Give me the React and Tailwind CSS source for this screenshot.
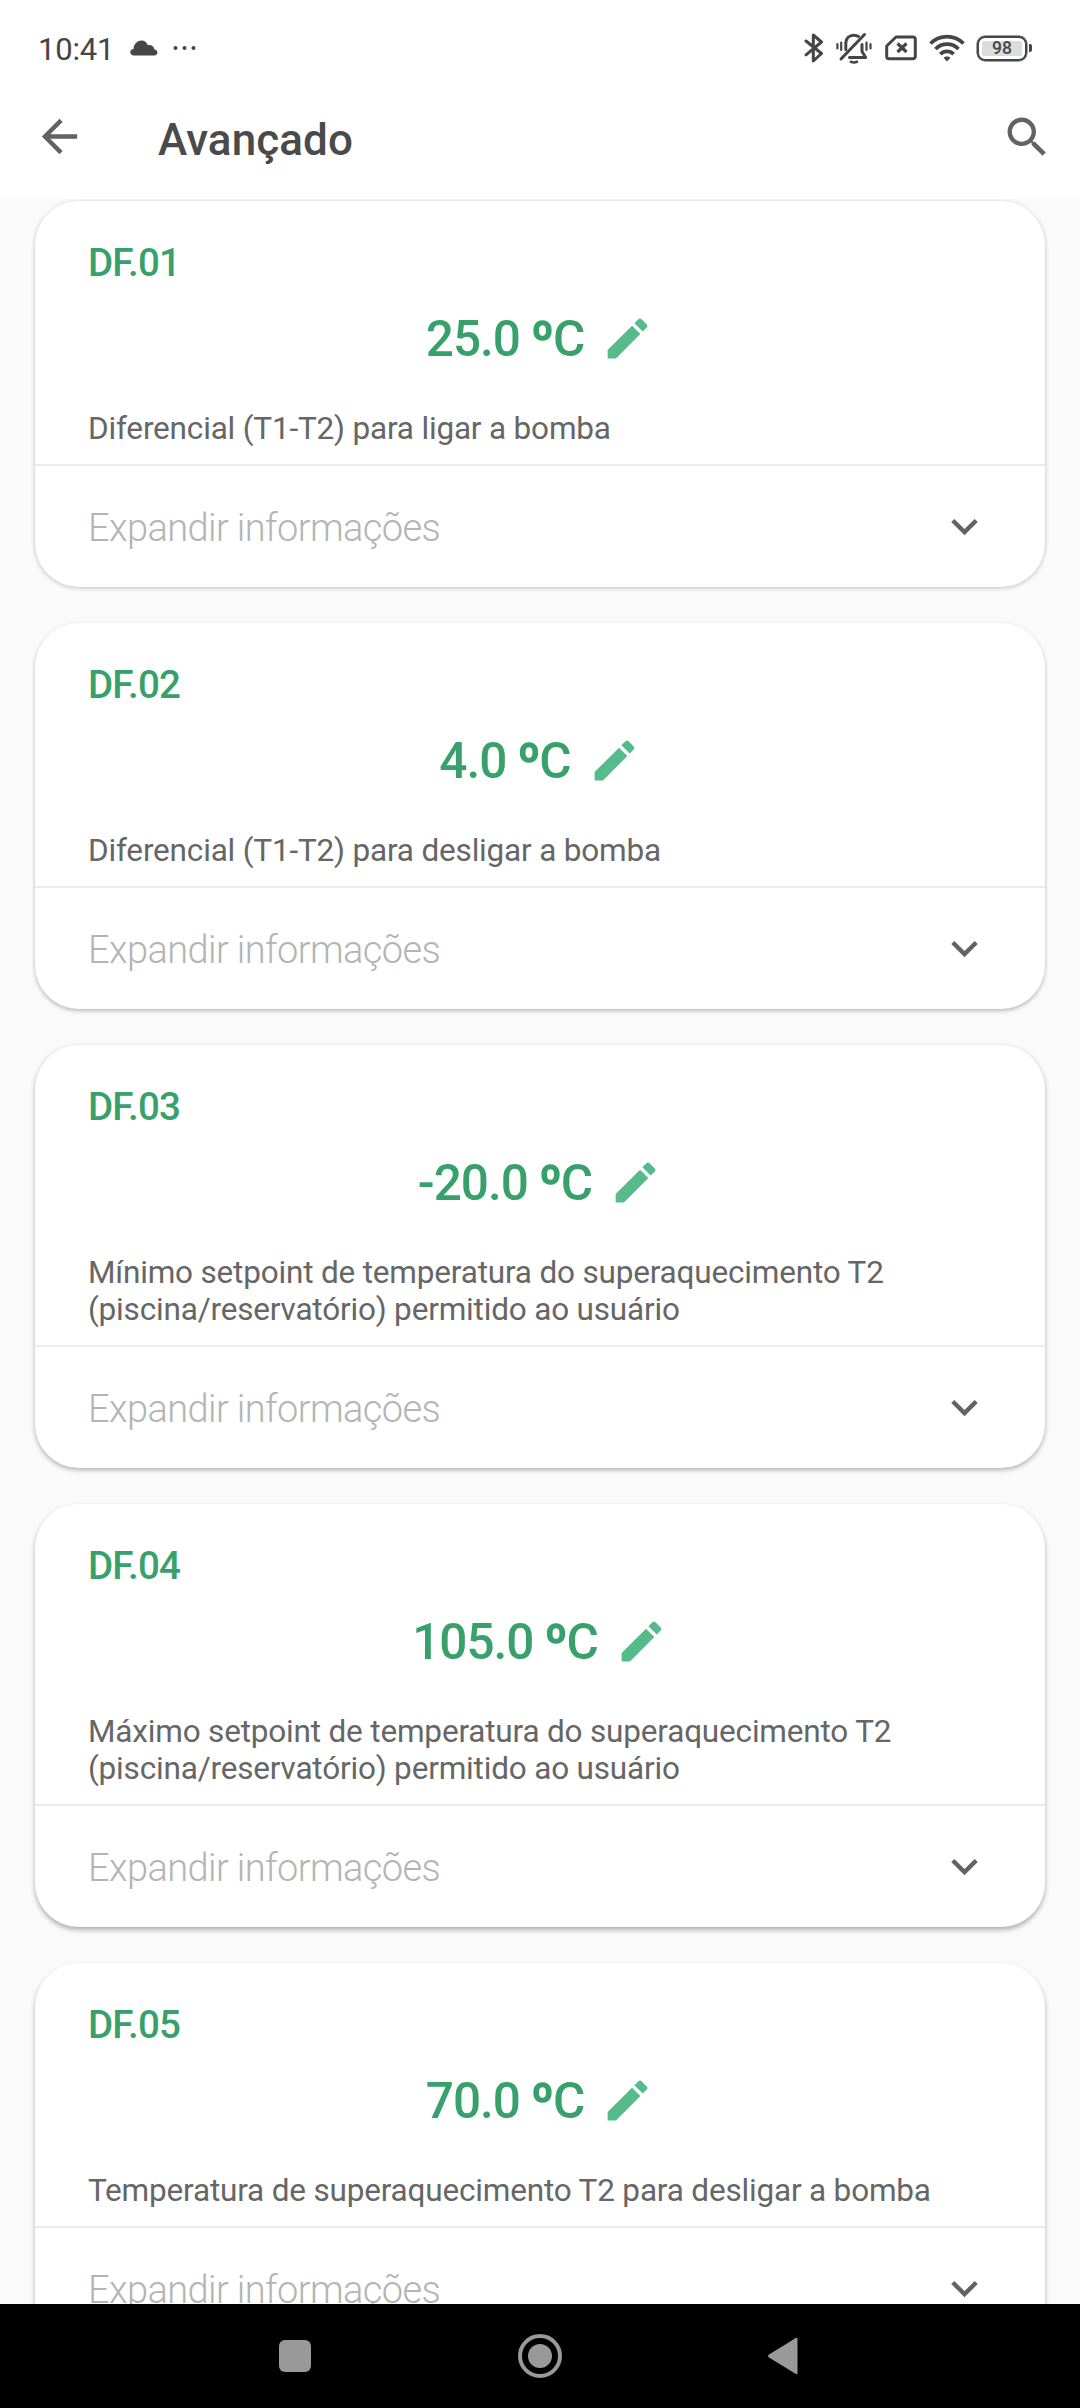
import React from "react";

const ITEMS = [
  { code: "DF.01", value: "25.0", lines: ["Diferencial (T1-T2) para ligar a bomba"], shadow: "shadow-[0_1px_4px_rgba(0,0,0,0.24)]" },
  { code: "DF.02", value: "4.0", lines: ["Diferencial (T1-T2) para desligar a bomba"], shadow: "shadow-[0_2px_4px_rgba(0,0,0,0.26)]" },
  { code: "DF.03", value: "-20.0", lines: ["Mínimo setpoint de temperatura do superaquecimento T2", "(piscina/reservatório) permitido ao usuário"], shadow: "shadow-[0_2px_5px_rgba(0,0,0,0.30)]" },
  { code: "DF.04", value: "105.0", lines: ["Máximo setpoint de temperatura do superaquecimento T2", "(piscina/reservatório) permitido ao usuário"], shadow: "shadow-[0_3px_5px_rgba(0,0,0,0.30)]" },
  { code: "DF.05", value: "70.0", lines: ["Temperatura de superaquecimento T2 para desligar a bomba"], shadow: "shadow-[0_3px_5px_rgba(0,0,0,0.30)]" },
];

function MaterialIcon({ d, className }) {
  return (
    <svg viewBox="0 0 24 24" fill="currentColor" className={className}>
      <path d={d} />
    </svg>
  );
}

const BACK = "M20 11H7.83l5.59-5.59L12 4l-8 8 8 8 1.41-1.41L7.83 13H20v-2z";
const SEARCH = "M15.5 14h-.79l-.28-.27C15.41 12.59 16 11.11 16 9.5 16 5.91 13.09 3 9.5 3S3 5.91 3 9.5 5.91 16 9.5 16c1.61 0 3.09-.59 4.23-1.57l.27.28v.79l5 4.99L20.49 19l-4.99-5zm-6 0C7.01 14 5 11.99 5 9.5S7.01 5 9.5 5 14 7.01 14 9.5 11.99 14 9.5 14z";
const EDIT = "M3 17.25V21h3.75L17.81 9.94l-3.75-3.75L3 17.25zM20.71 7.04c.39-.39.39-1.02 0-1.41l-2.34-2.34c-.39-.39-1.02-.39-1.41 0l-1.83 1.83 3.75 3.75 1.83-1.83z";
const EXPAND = "M16.59 8.59 12 13.17 7.41 8.59 6 10l6 6 6-6z";

function StatusBar() {
  return (
    <div className="flex h-[96px] items-center pl-[38px] pr-[48px] text-[#454545]">
      <span className="pt-[2px] text-[31px] leading-none tracking-[-0.2px]">10:41</span>
      <svg viewBox="0 0 28 16" className="ml-[16px] h-[16px] w-[28px]" fill="currentColor">
        <path d="M4 15.500C1.700 15.500 .3 14 .3 12.200c0-1.700 1.200-3.100 3.300-3.300C3.800 4.300 7 .6 11.400.6c3.200 0 5.300 1.800 6.300 4.600 3.600-.7 6.500 1.300 6.700 4.400 2 .3 3 1.400 3 3 0 1.700-1.200 2.900-3.100 2.900z" />
      </svg>
      <svg viewBox="0 0 24 6" className="ml-[15px] h-[6px] w-[24px]" fill="currentColor">
        <circle cx="2.500" cy="3" r="2" /><circle cx="11.500" cy="3" r="2" /><circle cx="20.500" cy="3" r="2" />
      </svg>
      <div className="ml-auto flex items-center">
        <svg viewBox="0 0 20 32" className="h-[32px] w-[20px]" fill="none" stroke="currentColor" strokeWidth="3" strokeLinejoin="round" strokeLinecap="round">
          <path d="M2 9l15.500 12.500L9.300 29V3l8.200 7L2 22.800" />
        </svg>
        <svg viewBox="0 0 36 32" className="ml-[12px] h-[32px] w-[36px]" fill="none" stroke="currentColor" strokeWidth="3" strokeLinecap="round" strokeLinejoin="round">
          <path d="M5 27L28.500 2.500" />
          <path d="M9.800 17.500V12C9.800 6 13.500 3.200 17.700 3.200c2 0 3.500.4 4.800 1.300M26 12.500v7l3.700 6H13.500" />
          <path d="M15 29.800q3 1.400 6 0" strokeWidth="2.600" />
          <path d="M1.400 12v4.500M5.200 10.500v7.500M34.500 12v4.500M30.500 10.500v7.500" strokeWidth="2.200" />
        </svg>
        <svg viewBox="0 0 32 26" className="ml-[13px] h-[26px] w-[32px]" fill="none" stroke="currentColor">
          <path d="M11 2H28a2.300 2.300 0 0 1 2.300 2.300V21.500a2.300 2.300 0 0 1-2.300 2.300H4a2.300 2.300 0 0 1-2.300-2.300V11z" strokeWidth="3" strokeLinejoin="round" />
          <path d="M12.500 8.500l9 8.500m0-8.500l-9 8.500" strokeWidth="3.200" />
        </svg>
        <svg viewBox="0 0 36 28" className="ml-[12px] h-[28px] w-[36px]" fill="none" stroke="currentColor" strokeWidth="3.800">
          <path d="M1.500 9.500C11 .4 25 .4 34.500 9.500" />
          <path d="M6.500 15C13 8.500 23 8.500 29.500 15" />
          <path d="M11.300 20.200c3.800-3.800 9.600-3.800 13.400 0" />
          <path d="M18 27.500l-3.500-3.700c1.800-1.800 5.200-1.800 7 0z" fill="currentColor" stroke="none" />
        </svg>
        <div className="ml-[12px] flex h-[25px] w-[50px] items-center rounded-[8px] border-[2.500px] border-current p-[3px] ring-[0.500px] ring-[#454545]">
          <span className="flex h-full w-full items-center justify-center rounded-[2px] bg-[#dcdcdc] pt-[2px] text-[17.500px] font-medium leading-none">98</span>
        </div>
        <span className="ml-[2px] h-[8px] w-[3px] rounded-r-[2px] bg-current" />
      </div>
    </div>
  );
}

function AppBar() {
  return (
    <header className="flex h-[103px] items-start pl-[33px] pr-[27px] text-[#636363]">
      <MaterialIcon d={BACK} className="mt-[14px] h-[53px] w-[53px]" />
      <h1 className="ml-[72px] mt-[18px] text-[44px] font-medium leading-[52px] tracking-[0.1px] text-[#4a4a4a]">Avançado</h1>
      <MaterialIcon d={SEARCH} className="ml-auto mt-[15px] h-[52.500px] w-[52.500px]" />
    </header>
  );
}

function ParameterCard({ code, value, lines, shadow }) {
  return (
    <section className={`shrink-0 rounded-[44px] bg-white ${shadow}`}>
      <div className="h-[265px] border-b-2 border-[#ececec] px-[53px] pt-[39px] has-[p+p]:h-[302px]">
        <h2 className="text-[38.500px] font-medium leading-[45px] tracking-[-0.800px] text-[#38a06b]">{code}</h2>
        <div className="mt-[24px] flex items-center justify-center text-[#38a06b]">
          <span className="text-[49.500px] font-medium leading-[60px] tracking-[-1px]">
            {value} <span className="font-bold [-webkit-text-stroke:1.500px_#38a06b]">º</span>C
          </span>
          <MaterialIcon d={EDIT} className="-mt-[2px] ml-[17px] h-[53px] w-[53px] text-[#56bb8b]" />
        </div>
        <div className="mt-[41px] text-[31.500px] leading-[37px] tracking-[-0.180px] text-[#666666]">
          {lines.map((line) => (
            <p key={line} className="whitespace-nowrap">{line}</p>
          ))}
        </div>
      </div>
      <div className="flex h-[121px] items-center justify-between pl-[53px] pr-[54px] text-[#636363]">
        <span className="pt-[4px] text-[38px] font-light leading-[45px] tracking-[-0.600px] text-[#b4b4b4]">Expandir informações</span>
        <MaterialIcon d={EXPAND} className="h-[53px] w-[53px]" />
      </div>
    </section>
  );
}

function NavigationBar() {
  return (
    <nav className="flex h-[104px] shrink-0 items-center bg-black pl-[279px] text-[#999999]">
      <span className="h-[32px] w-[32px] rounded-[6px] bg-current" />
      <span className="ml-[207px] flex h-[44px] w-[44px] items-center justify-center rounded-full border-4 border-current">
        <span className="h-[24px] w-[24px] rounded-full bg-current" />
      </span>
      <svg viewBox="0 0 30 38" className="ml-[206px] h-[38px] w-[30px]" fill="currentColor">
        <path d="M1 17.500L27.500 1.200Q29.500 0 29.500 2V36q0 2-2 .8L1 20.500q-2-1.500 0-3z" />
      </svg>
    </nav>
  );
}

export default function App() {
  return (
    <div className="flex h-[2408px] w-[1080px] flex-col overflow-hidden bg-white font-['Roboto',sans-serif]">
      <StatusBar />
      <AppBar />
      <main className="flex min-h-0 flex-1 flex-col gap-[36px] overflow-hidden bg-[#fafafa] px-[35px] pt-[2px]">
        {ITEMS.map((item) => (
          <ParameterCard key={item.code} {...item} />
        ))}
      </main>
      <NavigationBar />
    </div>
  );
}
